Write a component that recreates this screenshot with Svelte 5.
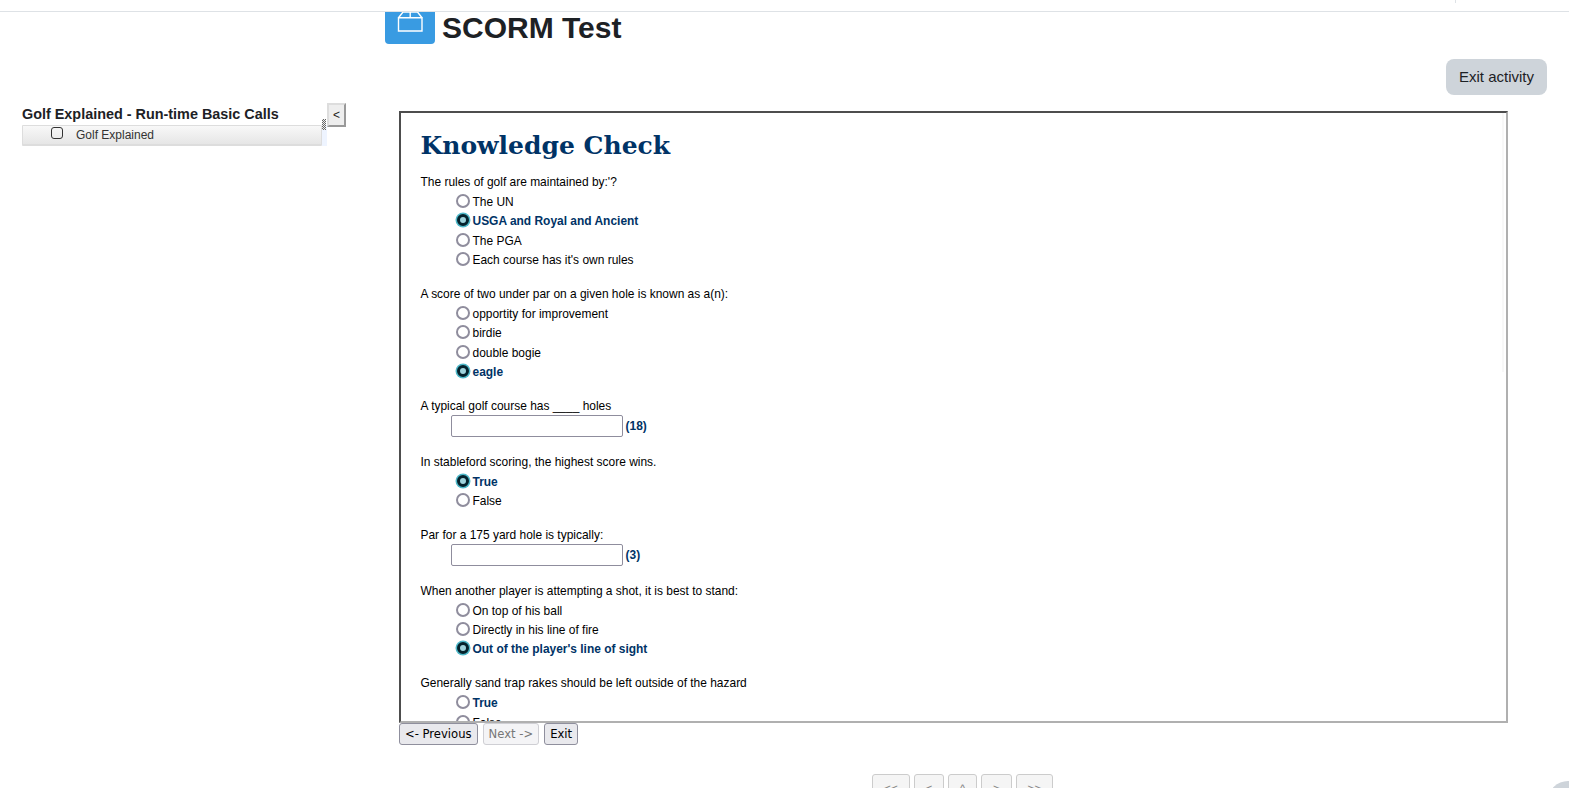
<script>
  const questions = [
    { text: "The rules of golf are maintained by:'?", type: 'radio', options: [
      { label: 'The UN' }, { label: 'USGA and Royal and Ancient', correct: true, checked: true }, { label: 'The PGA' }, { label: "Each course has it's own rules" } ] },
    { text: 'A score of two under par on a given hole is known as a(n):', type: 'radio', options: [
      { label: 'opportity for improvement' }, { label: 'birdie' }, { label: 'double bogie' }, { label: 'eagle', correct: true, checked: true } ] },
    { text: 'A typical golf course has ____ holes', type: 'text', answer: '(18)' },
    { text: 'In stableford scoring, the highest score wins.', type: 'radio', options: [
      { label: 'True', correct: true, checked: true }, { label: 'False' } ] },
    { text: 'Par for a 175 yard hole is typically:', type: 'text', answer: '(3)' },
    { text: 'When another player is attempting a shot, it is best to stand:', type: 'radio', options: [
      { label: 'On top of his ball' }, { label: 'Directly in his line of fire' }, { label: "Out of the player's line of sight", correct: true, checked: true } ] },
    { text: 'Generally sand trap rakes should be left outside of the hazard', type: 'radio', options: [
      { label: 'True', correct: true }, { label: 'False' } ] }
  ];
  const pager = ['<<', '<', '^', '>', '>>'];
</script>

<div class="page">
  <header class="topbar"><span class="tick"></span></header>

  <div class="titlerow">
    <div class="activity-icon">
      <svg width="28" height="28" viewBox="0 0 28 28" fill="none" stroke="#fff" stroke-width="1.4">
        <path d="M2.5 13.7 H26 V27 H2.5 Z" />
        <path d="M2.5 13.7 L7 8 H21.5 L26 13.7 M14.2 8 V13.7" />
      </svg>
    </div>
    <h1 class="title">SCORM Test</h1>
  </div>

  <div class="actions"><button class="exit-activity">Exit activity</button></div>

  <main class="main">
    <aside class="sidebar">
      <div class="toc">
        <h2 class="toc-title">Golf Explained - Run-time Basic Calls</h2>
        <div class="toc-wrap">
          <div class="toc-row">
            <span class="checkbox"></span>
            <span class="toc-label">Golf Explained</span>
          </div>
          <div class="tint"><span class="grip"></span></div>
        </div>
      </div>
      <button class="toggle">&lt;</button>
    </aside>

    <section class="content">
      <div class="frame">
        <span class="scrollghost"></span>
        <h1 class="heading">Knowledge Check</h1>
        {#each questions as q}
          <div class="question">
            <div class="qtext">{q.text}</div>
            {#if q.type === 'radio'}
              {#each q.options as o}
                <label class="option" class:correct={o.correct}>
                  <input type="radio" checked={o.checked} />{o.label}
                </label>
              {/each}
            {:else}
              <div class="fill"><input type="text" /><b class="answer">{q.answer}</b></div>
            {/if}
          </div>
        {/each}
      </div>
      <div class="navbtns">
        <button class="nav">&lt;- Previous</button>
        <button class="nav" disabled>Next -&gt;</button>
        <button class="nav">Exit</button>
      </div>
      <div class="pager">
        {#each pager as p}<button class="pg" disabled>{p}</button>{/each}
      </div>
    </section>
  </main>

  <div class="helpbubble"></div>
</div>

<style>
  :global(body) { margin: 0; overflow: hidden; background: #fff; }
  .page { position: relative; width: 1569px; height: 788px; overflow: hidden; font-family: "Liberation Sans", Arial, sans-serif; color: #1d2125; }
  .topbar { height: 11px; border-bottom: 1px solid #dee2e6; position: relative; box-sizing: content-box; }
  .tick { position: absolute; left: 1455px; top: 0; width: 1px; height: 3px; background: #dee2e6; }
  .titlerow { display: flex; align-items: flex-start; padding-left: 385px; height: 32px; }
  .activity-icon { width: 50px; height: 32px; background: #399be2; border-radius: 0 0 4px 4px; overflow: hidden; display: flex; justify-content: center; }
  .activity-icon svg { margin-top: -8px; }
  .title { margin: 0 0 0 7px; font-size: 30px; line-height: 32px; font-weight: 700; color: #1d2125; }
  .actions { display: flex; justify-content: flex-end; padding: 15px 22px 0 0; }
  .exit-activity { width: 101px; height: 36px; border: 0; border-radius: 8px; background: #ced4da; color: #1d2125; font: 15px/36px "Liberation Sans", Arial, sans-serif; padding: 0; }
  .main { display: flex; align-items: flex-start; }
  .sidebar { display: flex; align-items: flex-start; margin-left: 22px; margin-top: 8px; }
  .toc { width: 305px; padding-top: 1px; }
  .toc-title { margin: 0; font-size: 14.4px; line-height: 21px; font-weight: 700; color: #1d2125; white-space: nowrap; }
  .toc-wrap { display: flex; }
  .toc-row { box-sizing: border-box; width: 300px; height: 21px; border: 1px solid #ddd; border-bottom-width: 2px; border-radius: 1px; background: linear-gradient(#f8f8f8, #e6e6e6); display: flex; align-items: flex-start; padding-left: 28px; }
  .tint { width: 5px; height: 21px; background: #eef4ff; position: relative; }
  .grip { position: absolute; left: 0; top: -6px; width: 4px; height: 11px; background: repeating-conic-gradient(#666 0 25%, #eee 0 50%) 0 0 / 2px 2px; }
  .checkbox { box-sizing: border-box; width: 12px; height: 12px; border: 1.4px solid #333; border-radius: 3px; margin-top: 1px; background: transparent; }
  .toc-label { margin-left: 13px; font-size: 12px; line-height: 19px; color: #333; }
  .toggle { box-sizing: border-box; width: 19px; height: 24px; padding: 0; background: #eee; color: #222; border: 2px solid; border-color: #ddd #999 #999 #ddd; font: 12px "Liberation Sans", Arial, sans-serif; }
  .content { margin-left: 53px; margin-top: 16px; }
  .frame { position: relative; box-sizing: border-box; width: 1109px; height: 612px; border: 2px solid; border-color: #4d4d4d #b0b0b0 #b0b0b0 #4d4d4d; overflow: hidden; padding: 0 0 0 19.5px; color: #000; }
  .scrollghost { position: absolute; right: 2px; top: 0; width: 2px; height: 259px; background: #f8f8f8; }
  .heading { margin: 0; padding-top: 17px; box-sizing: content-box; font: 700 25px/32px "DejaVu Serif", serif; color: #003366; height: 43px; }
  .question { margin-bottom: 14.7px; font-size: 11.96px; line-height: 19.33px; }
  .qtext { height: 20px; }
  .option { display: flex; align-items: center; height: 19.33px; padding-left: 35.5px; }
  .option.correct { font-weight: 700; color: #003366; }
  .option input { appearance: none; box-sizing: border-box; margin: 0 2.5px 0 0; width: 14px; height: 14px; border: 2px solid #8f8d9d; border-radius: 50%; background: #fff; position: relative; top: -1.5px; }
  .option input:checked { width: 12px; height: 12px; margin: 0 3.5px 0 1px; top: -1.5px; border: 3px solid #05222c; background: #9fd3dc; box-shadow: 0 0 0 1.5px #4fb8c9; }
  .fill { display: flex; align-items: flex-start; padding-left: 30px; height: 20.9px; }
  .fill input { box-sizing: border-box; width: 172px; height: 22px; margin: -2px 3px 0 0; padding: 0; border: 1px solid #8f8d9d; border-radius: 2px; background: #fff; }
  .answer { color: #003366; }
  .navbtns { display: flex; gap: 5px; }
  .nav { box-sizing: border-box; height: 22px; padding: 0 5px 1px; border: 1px solid #8f8f9d; border-radius: 3px; background: #e9e9ed; color: #000; font: 12.9px/19px "DejaVu Sans", sans-serif; font-stretch: condensed; }
  .nav:disabled { border-color: #cfcfd4; background: #f4f4f6; color: #777; }
  .pager { display: flex; gap: 4px; margin: 29px 0 0 473px; }
  .pg { box-sizing: border-box; height: 30px; padding: 0 10.75px; border: 1px solid #ccc; border-radius: 3px; background: #f5f5f5; color: #888; font: 12px "Liberation Sans", Arial, sans-serif; display: block; }
  .helpbubble { position: absolute; left: 1548px; top: 781px; width: 40px; height: 40px; border-radius: 50%; background: #ced4da; }
</style>
